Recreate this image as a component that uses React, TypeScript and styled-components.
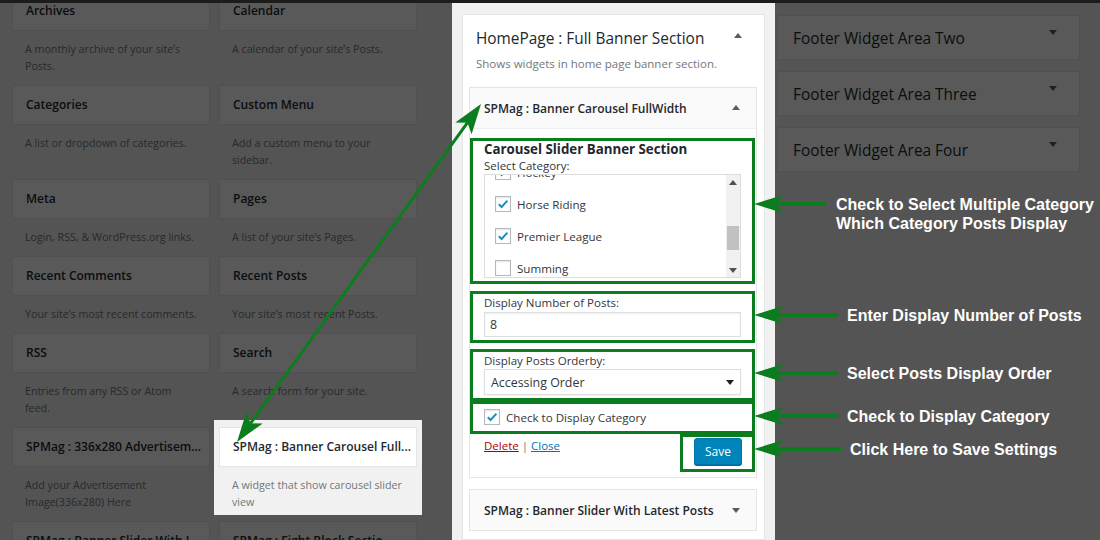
import React from "react";
import styled, { createGlobalStyle, css } from "styled-components";

const GREEN = "#0c7d1e";

const GlobalStyle = createGlobalStyle`
  html, body { margin: 0; padding: 0; }
  body {
    background: #f1f1f1;
    font-family: "Open Sans", "Noto Sans", sans-serif;
    color: #23282d;
  }
  * { box-sizing: border-box; }
`;

const Page = styled.div`
  position: relative;
  width: 1100px;
  height: 540px;
  overflow: hidden;
  background: #f1f1f1;
`;

const TopStrip = styled.div`
  position: relative;
  z-index: 3;
  height: 3px;
  background: #1c1c1c;
`;

const Dim = styled.div`
  position: absolute;
  inset: 0;
  z-index: 1;
  background: rgba(0, 0, 0, 0.65);
`;

const Main = styled.div`
  display: flex;
  align-items: flex-start;
  height: 537px;
  padding-left: 12px;
`;

/* ---------- available widgets ---------- */

const WidgetGrid = styled.div`
  display: grid;
  grid-template-columns: 198px 198px;
  column-gap: 9px;
  width: 405px;
  margin: -12px 35px 0 0;
`;

const Available = styled.div<{ $lit?: boolean }>`
  ${(p) =>
    p.$lit &&
    css`
      position: relative;
      z-index: 2;
      align-self: start;
      margin: -7px -5px 0;
      padding: 7px 5px 0;
      background: #f1f1f1;
    `}
`;

const AvailableTitle = styled.div`
  height: 40px;
  padding: 0 13px;
  border: 1px solid #e5e5e5;
  background: #fff;
  font-size: 12px;
  font-weight: 600;
  line-height: 38px;
  white-space: nowrap;
  overflow: hidden;
`;

const AvailableDesc = styled.div<{ $lit?: boolean }>`
  padding: 10px 13px ${(p) => (p.$lit ? 4 : 10)}px;
  font-size: 10.7px;
  line-height: 17px;
  color: #72777c;
`;

/* ---------- sidebar column ---------- */

const SidebarColumn = styled.div`
  position: relative;
  z-index: 2;
  align-self: stretch;
  width: 323px;
  margin-right: 2px;
  padding: 11px 10px 0;
  background: #f1f1f1;
`;

const Sidebar = styled.div`
  height: 100%;
  padding: 0 7px 0 6px;
  border: 1px solid #e5e5e5;
  background: #fff;
`;

const SidebarHead = styled.div`
  display: flex;
  justify-content: space-between;
  align-items: flex-start;
  padding: 12px 15px 0 7px;
`;

const SidebarTitle = styled.h2`
  margin: 0;
  font-size: 15.4px;
  font-weight: 400;
  line-height: 24px;
  color: #23282d;
`;

const SidebarDesc = styled.p`
  margin: 4px 0 15px 7px;
  font-size: 11.5px;
  line-height: 17px;
  color: #72777c;
`;

const Caret = styled.span<{ $down?: boolean; $top?: number; $color?: string }>`
  display: block;
  flex-shrink: 0;
  width: 0;
  height: 0;
  margin-top: ${(p) => p.$top ?? 0}px;
  border-left: 4px solid transparent;
  border-right: 4px solid transparent;
  ${(p) =>
    p.$down
      ? css`border-top: 5px solid ${p.$color ?? "#555d66"};`
      : css`border-bottom: 5px solid ${p.$color ?? "#555d66"};`}
`;

const Widget = styled.div<{ $gap?: number }>`
  margin-top: ${(p) => p.$gap ?? 0}px;
  border: 1px solid #e5e5e5;
  background: #fff;
`;

const WidgetTop = styled.div<{ $open?: boolean }>`
  display: flex;
  justify-content: space-between;
  align-items: center;
  height: 40px;
  padding: 0 16px 0 14px;
  background: #fafafa;
  ${(p) => p.$open && css`border-bottom: 1px solid #eee; height: 41px;`}
`;

const WidgetTitle = styled.h3`
  margin: 0;
  font-size: 12px;
  font-weight: 600;
  color: #23282d;
`;

const WidgetInside = styled.div`
  padding: 9px 1px 5px 0;
`;

const Mark = styled.div<{ $gap?: number; $pb?: number }>`
  margin-top: ${(p) => p.$gap ?? 0}px;
  padding: 0 11px ${(p) => p.$pb ?? 3}px;
  border: 3px solid ${GREEN};
`;

const FormHeading = styled.div`
  font-size: 13.3px;
  font-weight: 700;
  line-height: 17px;
  color: #23282d;
`;

const FieldLabel = styled.div<{ $lh?: number }>`
  font-size: 11.5px;
  line-height: ${(p) => p.$lh ?? 17}px;
  color: #32373c;
`;

const CheckList = styled.div`
  display: flex;
  height: 104px;
  border: 1px solid #ddd;
  background: #fff;
  overflow: hidden;
`;

const CheckItems = styled.div`
  flex: 1;
  margin-top: -19px;
`;

const CheckRow = styled.label<{ $h?: number; $pl?: number }>`
  display: flex;
  align-items: center;
  gap: 6px;
  height: ${(p) => p.$h ?? 32}px;
  padding-left: ${(p) => p.$pl ?? 10}px;
  font-size: 11.6px;
  color: #32373c;
`;

const Box = styled.span`
  display: flex;
  align-items: center;
  justify-content: center;
  width: 16px;
  height: 16px;
  border: 1px solid #b4b9be;
  background: #fff;
  box-shadow: inset 0 1px 2px rgba(0, 0, 0, 0.1);
`;

const ScrollBar = styled.div`
  display: flex;
  flex-direction: column;
  width: 14px;
  background: #f1f1f1;
`;

const ScrollBtn = styled.div`
  display: flex;
  align-items: center;
  justify-content: center;
  height: 14px;
`;

const ScrollTrack = styled.div`
  flex: 1;
  padding: 37px 1px 0;
`;

const Thumb = styled.div`
  height: 24px;
  background: #c1c1c1;
`;

const TextInput = styled.div`
  height: 25px;
  margin-top: 1px;
  padding: 0 5px;
  border: 1px solid #ddd;
  box-shadow: inset 0 1px 2px rgba(0, 0, 0, 0.07);
  font-size: 12.4px;
  line-height: 23px;
  color: #32373c;
`;

const SelectBox = styled.div`
  display: flex;
  align-items: center;
  justify-content: space-between;
  height: 26px;
  padding: 0 6px 0 6px;
  border: 1px solid #ddd;
  box-shadow: 0 1px 1px rgba(0, 0, 0, 0.04);
  font-size: 12.4px;
  color: #32373c;
`;

const Actions = styled.div`
  display: flex;
  justify-content: space-between;
  align-items: flex-start;
`;

const Links = styled.div`
  padding: 3px 0 0 14px;
  font-size: 11.5px;
  line-height: 17px;
  color: #72777c;
`;

const ActionLink = styled.a<{ $danger?: boolean }>`
  color: ${(p) => (p.$danger ? "#a00" : "#0073aa")};
  text-decoration: underline;
`;

const SaveMark = styled.div`
  margin-right: 0;
  padding: 1px 10px 4px 11px;
  border: 3px solid ${GREEN};
`;

const SaveButton = styled.button`
  height: 27px;
  padding: 0 10px;
  border: 1px solid #0073aa;
  border-radius: 3px;
  background: #0085ba;
  box-shadow: 0 1px 0 #006799;
  color: #fff;
  font-family: "Open Sans", "Noto Sans", sans-serif;
  font-size: 12px;
`;

/* ---------- footer areas ---------- */

const AreaColumn = styled.div`
  display: flex;
  flex-direction: column;
  gap: 11px;
  width: 303px;
  padding-top: 12px;
`;

const AreaBox = styled.div`
  display: flex;
  justify-content: space-between;
  align-items: center;
  height: 45px;
  padding: 1px 22px 0 15px;
  border: 1px solid #e5e5e5;
  background: #fff;
  font-size: 15.4px;
  color: #23282d;
`;

/* ---------- annotations ---------- */

const ArrowLayer = styled.svg`
  position: absolute;
  inset: 0;
  z-index: 3;
  pointer-events: none;
`;

const Callout = styled.div<{ $x: number; $y: number }>`
  position: absolute;
  z-index: 3;
  left: ${(p) => p.$x}px;
  top: ${(p) => p.$y}px;
  font-family: "Liberation Sans", Arial, sans-serif;
  font-size: 16px;
  font-weight: 700;
  line-height: 19px;
  color: #fff;
  white-space: nowrap;
`;

const available: { title: string; desc: string; lit?: boolean }[] = [
  { title: "Archives", desc: "A monthly archive of your site\u2019s Posts." },
  { title: "Calendar", desc: "A calendar of your site\u2019s Posts." },
  { title: "Categories", desc: "A list or dropdown of categories." },
  { title: "Custom Menu", desc: "Add a custom menu to your sidebar." },
  { title: "Meta", desc: "Login, RSS, & WordPress.org links." },
  { title: "Pages", desc: "A list of your site\u2019s Pages." },
  { title: "Recent Comments", desc: "Your site\u2019s most recent comments." },
  { title: "Recent Posts", desc: "Your site\u2019s most recent Posts." },
  { title: "RSS", desc: "Entries from any RSS or Atom feed." },
  { title: "Search", desc: "A search form for your site." },
  { title: "SPMag : 336x280 Advertisem...", desc: "Add your Advertisement Image(336x280) Here" },
  { title: "SPMag : Banner Carousel Full...", desc: "A widget that show carousel slider view", lit: true },
  { title: "SPMag : Banner Slider With L...", desc: "" },
  { title: "SPMag : Eight Block Sectio...", desc: "" },
];

const categories = [
  { name: "Hockey", on: true },
  { name: "Horse Riding", on: true },
  { name: "Premier League", on: true },
  { name: "Summing", on: false },
  { name: "Tennis", on: false },
];

const callouts = [
  { y: 204, tail: 826, x: 836, lines: ["Check to Select Multiple Category", "Which Category Posts Display"] },
  { y: 315, tail: 838, x: 847, lines: ["Enter Display Number of Posts"] },
  { y: 373, tail: 838, x: 847, lines: ["Select Posts Display Order"] },
  { y: 416, tail: 838, x: 847, lines: ["Check to Display Category"] },
  { y: 449, tail: 841, x: 850, lines: ["Click Here to Save Settings"] },
];

const Tick = () => (
  <svg width="12" height="12" viewBox="0 0 12 12">
    <path d="M1.8 6.2 L4.6 9 L10.4 2.6" fill="none" stroke="#1e8cbe" strokeWidth="2" />
  </svg>
);

const Check: React.FC<{ on: boolean }> = ({ on }) => <Box>{on && <Tick />}</Box>;

export default function App() {
  return (
    <Page>
      <GlobalStyle />
      <TopStrip />
      <Main>
        <WidgetGrid>
          {available.map((w) => (
            <Available key={w.title} $lit={w.lit}>
              <AvailableTitle>{w.title}</AvailableTitle>
              {w.desc && <AvailableDesc $lit={w.lit}>{w.desc}</AvailableDesc>}
            </Available>
          ))}
        </WidgetGrid>

        <SidebarColumn>
          <Sidebar>
            <SidebarHead>
              <SidebarTitle>HomePage : Full Banner Section</SidebarTitle>
              <Caret $top={6} />
            </SidebarHead>
            <SidebarDesc>Shows widgets in home page banner section.</SidebarDesc>

            <Widget>
              <WidgetTop $open>
                <WidgetTitle>SPMag : Banner Carousel FullWidth</WidgetTitle>
                <Caret $top={-2} />
              </WidgetTop>
              <WidgetInside>
                <Mark>
                  <FormHeading>Carousel Slider Banner Section</FormHeading>
                  <FieldLabel $lh={16}>Select Category:</FieldLabel>
                  <CheckList>
                    <CheckItems>
                      {categories.map((c) => (
                        <CheckRow key={c.name}>
                          <Check on={c.on} />
                          {c.name}
                        </CheckRow>
                      ))}
                    </CheckItems>
                    <ScrollBar>
                      <ScrollBtn>
                        <Caret $color="#505050" />
                      </ScrollBtn>
                      <ScrollTrack>
                        <Thumb />
                      </ScrollTrack>
                      <ScrollBtn>
                        <Caret $down $color="#505050" />
                      </ScrollBtn>
                    </ScrollBar>
                  </CheckList>
                </Mark>

                <Mark $gap={7}>
                  <FieldLabel>Display Number of Posts:</FieldLabel>
                  <TextInput>8</TextInput>
                </Mark>

                <Mark $gap={6}>
                  <FieldLabel>Display Posts Orderby:</FieldLabel>
                  <SelectBox>
                    Accessing Order
                    <Caret $down $color="#222" />
                  </SelectBox>
                </Mark>

                <Mark $pb={1}>
                  <CheckRow $h={26} $pl={0}>
                    <Check on />
                    Check to Display Category
                  </CheckRow>
                </Mark>

                <Actions>
                  <Links>
                    <ActionLink $danger>Delete</ActionLink> | <ActionLink>Close</ActionLink>
                  </Links>
                  <SaveMark>
                    <SaveButton>Save</SaveButton>
                  </SaveMark>
                </Actions>
              </WidgetInside>
            </Widget>

            <Widget $gap={11}>
              <WidgetTop>
                <WidgetTitle>SPMag : Banner Slider With Latest Posts</WidgetTitle>
                <Caret $down />
              </WidgetTop>
            </Widget>
          </Sidebar>
        </SidebarColumn>

        <AreaColumn>
          {["Two", "Three", "Four"].map((n) => (
            <AreaBox key={n}>
              Footer Widget Area {n}
              <Caret $down $top={-12} />
            </AreaBox>
          ))}
        </AreaColumn>
      </Main>

      <Dim />

      <ArrowLayer width="1100" height="540" viewBox="0 0 1100 540">
        {callouts.map((c) => (
          <g key={c.y} fill={GREEN}>
            <line x1="776" y1={c.y} x2={c.tail} y2={c.y} stroke={GREEN} strokeWidth="4" />
            <polygon points={`754,${c.y} 783,${c.y - 9} 776,${c.y} 783,${c.y + 9}`} />
          </g>
        ))}
        <g fill={GREEN}>
          <line x1="467.5" y1="122.7" x2="250.5" y2="423.3" stroke={GREEN} strokeWidth="3" />
          <polygon points="481,104 471.6,134.2 467.5,122.7 455.3,122.5" />
          <polygon points="237,442 262.7,423.5 250.5,423.3 246.4,411.8" />
        </g>
      </ArrowLayer>

      {callouts.map((c) => (
        <Callout key={c.y} $x={c.x} $y={c.y - 9.5}>
          {c.lines.map((l) => (
            <div key={l}>{l}</div>
          ))}
        </Callout>
      ))}
    </Page>
  );
}
